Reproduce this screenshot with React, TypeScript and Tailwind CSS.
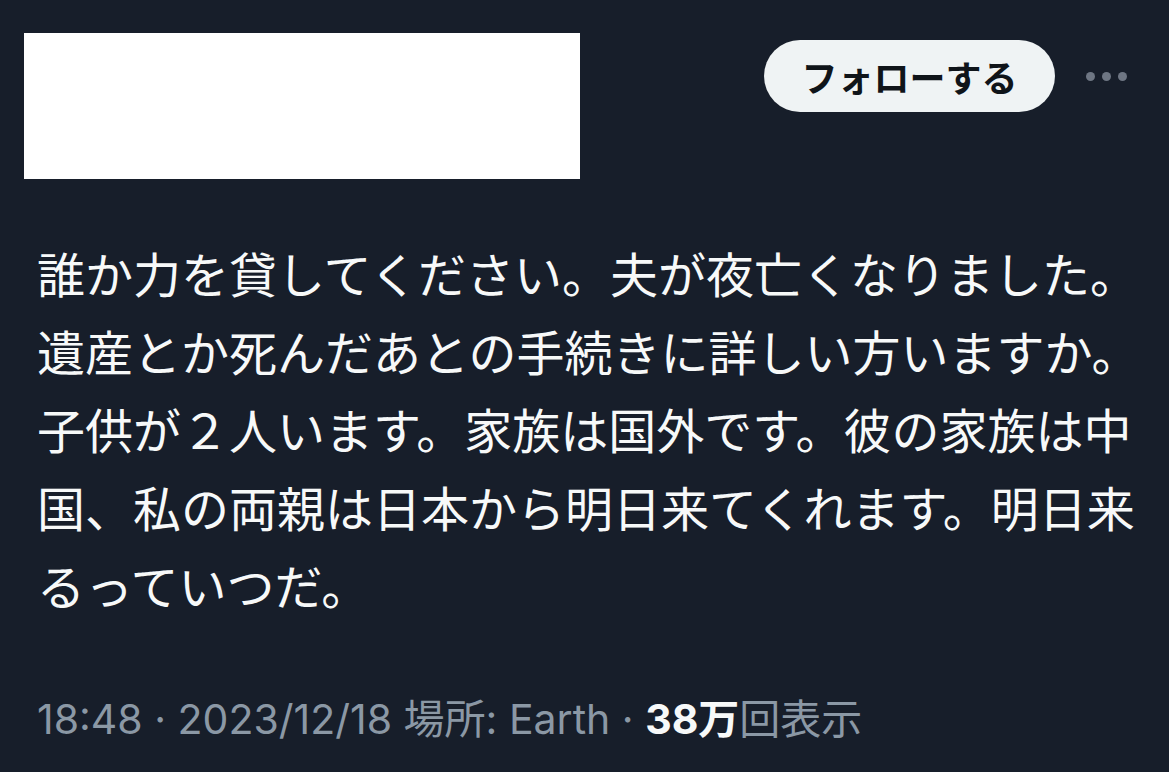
import React from "react";

const lines = [
  "誰か力を貸してください。夫が夜亡くなりました。",
  "遺産とか死んだあとの手続きに詳しい方いますか。",
  "子供が２人います。家族は国外です。彼の家族は中",
  "国、私の両親は日本から明日来てくれます。明日来",
  "るっていつだ。",
];

export default function App() {
  return (
    <div className="w-[1169px] h-[772px] bg-[#171e2a] flex flex-col overflow-hidden">
      <div className="flex flex-row items-start pt-[33px] pl-[24px] pr-[42px]">
        <div className="w-[556px] h-[146px] bg-white" />
        <div className="ml-auto mt-[7px] h-[72px] w-[291px] rounded-full bg-[#eff3f4] flex items-center justify-center">
          <span
            className="text-[36px] font-bold text-[#0f1419] leading-none"
            style={{ fontFamily: '"Noto Sans CJK JP", sans-serif' }}
          >
            フォローする
          </span>
        </div>
        <div className="ml-[31px] mt-[39px] flex flex-row gap-[7px]">
          <div className="w-[9px] h-[9px] rounded-full bg-[#6e7683]" />
          <div className="w-[9px] h-[9px] rounded-full bg-[#6e7683]" />
          <div className="w-[9px] h-[9px] rounded-full bg-[#6e7683]" />
        </div>
      </div>
      <div
        className="mt-[54px] pl-[37px] flex flex-col text-[48px] text-[#f7f9f9] leading-[78px]"
        style={{ fontFamily: '"Noto Sans CJK JP", sans-serif' }}
      >
        {lines.map((l, i) => (
          <div key={i} className="whitespace-nowrap h-[78px]">
            {l}
          </div>
        ))}
      </div>
      <div
        className="mt-[71px] pl-[37px] text-[41px] leading-[50px] text-[#8b98a5] whitespace-nowrap"
        style={{ fontFamily: 'Inter, "Noto Sans CJK JP", sans-serif' }}
      >
        18:48 · 2023/12/18 場所: Earth ·{" "}
        <span className="font-bold text-[#f7f9f9]">38万</span>回表示
      </div>
    </div>
  );
}
